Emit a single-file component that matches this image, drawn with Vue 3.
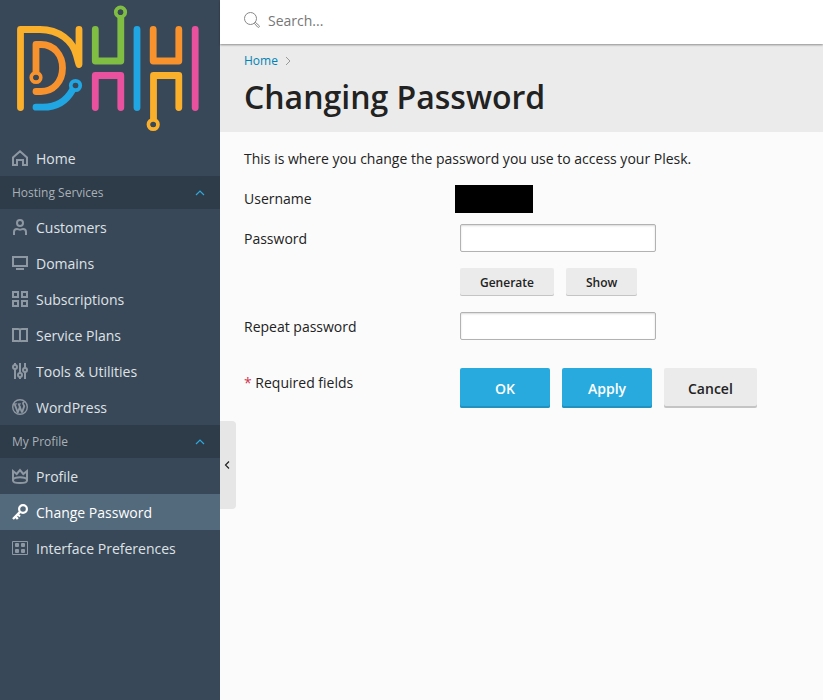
<script setup>
import { ref } from 'vue';

const search = ref('');
const password = ref('');
const repeatPassword = ref('');
const showPassword = ref(false);

const groups = ref([
  {
    title: '',
    open: true,
    items: [{ label: 'Home', icon: 'home' }],
  },
  {
    title: 'Hosting Services',
    open: true,
    items: [
      { label: 'Customers', icon: 'user' },
      { label: 'Domains', icon: 'screen' },
      { label: 'Subscriptions', icon: 'grid' },
      { label: 'Service Plans', icon: 'book' },
      { label: 'Tools & Utilities', icon: 'sliders' },
      { label: 'WordPress', icon: 'wordpress' },
    ],
  },
  {
    title: 'My Profile',
    open: true,
    items: [
      { label: 'Profile', icon: 'crown' },
      { label: 'Change Password', icon: 'key', active: true },
      { label: 'Interface Preferences', icon: 'prefs' },
    ],
  },
]);

const generate = () => {
  const value = Math.random().toString(36).slice(2, 14);
  password.value = value;
  repeatPassword.value = value;
};

const reset = () => {
  password.value = '';
  repeatPassword.value = '';
};
</script>

<template>
  <div class="page">
    <aside class="sidebar">
      <a href="#" class="logo" aria-label="DHH">
        <svg width="220" height="140" viewBox="0 0 220 140" fill="none" stroke-width="6.8" stroke-linecap="round" stroke-linejoin="round">
          <g stroke="#fbb02c">
            <path d="M20.500 107.500V29.500H40C59 29.500 73 41 76.500 55.500C77.500 59 78 62 79 64.500V29.500" />
            <path d="M153.500 120V75.500H178.800V107.500" />
            <circle cx="153.200" cy="124.500" r="4.600" stroke-width="4" />
          </g>
          <g stroke="#f7922d">
            <path d="M36 72V44.500H41C54 44.500 62.500 55 62.500 68C62.500 82 53 91.500 41 91.500H36" />
            <circle cx="36" cy="77.500" r="4.600" stroke-width="4" />
            <path d="M153.200 29.500V61H178.800V29.500" />
          </g>
          <g stroke="#20a6e2">
            <path d="M36 107.200H43C57 107.200 67 100 72.500 90" />
            <circle cx="75.500" cy="85.500" r="4.600" stroke-width="4" />
            <path d="M137 29.500V107.500" />
          </g>
          <g stroke="#80bd43">
            <path d="M95.300 29.500V61H120.800V17" />
            <circle cx="120.500" cy="12.200" r="4.600" stroke-width="4" />
          </g>
          <g stroke="#e9519f">
            <path d="M95.300 107.500V75.500H120.800V107.500" />
            <path d="M195.200 29.500V107.500" />
          </g>
          <g fill="#394858">
            <circle cx="153.200" cy="124.500" r="2.800" />
            <circle cx="36" cy="77.500" r="2.800" />
            <circle cx="75.500" cy="85.500" r="2.800" />
            <circle cx="120.500" cy="12.200" r="2.800" />
          </g>
        </svg>
      </a>

      <nav>
        <div v-for="group in groups" :key="group.title">
          <button
            v-if="group.title"
            type="button"
            class="group-title"
            :aria-expanded="group.open"
            @click="group.open = !group.open"
          >
            {{ group.title }}
            <svg width="10" height="6" viewBox="0 0 10 6" :class="{ closed: !group.open }">
              <path d="M1 5L5 1L9 5" fill="none" stroke="#2ea9dc" stroke-width="1.200" />
            </svg>
          </button>
          <template v-if="group.open">
            <a
              v-for="item in group.items"
              :key="item.label"
              href="#"
              class="nav-item"
              :class="{ active: item.active }"
            >
              <svg class="icon" width="16" height="16" viewBox="0 0 16 16" fill="none" stroke="currentColor" stroke-width="2">
                <path v-if="item.icon === 'home'" d="M1 15V7.500L8 1.300L15 7.500V15H11V10H5V15Z" />
                <template v-else-if="item.icon === 'user'">
                  <circle cx="8" cy="4" r="3" />
                  <path d="M2 16V13C2 11 3 10 5 10C6.200 10 6.800 10.800 8 10.800S9.800 10 11 10C13 10 14 11 14 13V16" />
                </template>
                <template v-else-if="item.icon === 'screen'">
                  <path d="M1 2H15V11H1Z" />
                  <path d="M4 14H12" />
                </template>
                <path v-else-if="item.icon === 'grid'" d="M1 1H6V6H1ZM10 1H15V6H10ZM1 10H6V15H1ZM10 10H15V15H10Z" />
                <path v-else-if="item.icon === 'book'" d="M1 2H6Q8 2 8 3Q8 2 10 2H15V14H10Q8 14 8 15Q8 14 6 14H1ZM8 2V15" />
                <template v-else-if="item.icon === 'sliders'">
                  <circle cx="3" cy="4" r="2" />
                  <circle cx="8" cy="12" r="2" />
                  <circle cx="13" cy="7" r="2" />
                  <path d="M3 6V16M3 0V2M8 0V10M8 14V16M13 0V5M13 9V16" />
                </template>
                <template v-else-if="item.icon === 'wordpress'">
                  <circle cx="8" cy="8" r="7.300" stroke-width="1.400" />
                  <path d="M2.600 5L6 14M6.700 5L10 13.500M5.800 13.500L8.200 7M10 13.500L12.300 7" stroke-width="1.900" />
                  <path d="M2 4.900H5M5.800 4.900H9" stroke-width="1" />
                  <path d="M12.300 7.500C12.300 5.800 10.700 5.500 11 4C11.200 3.200 12 3 12.600 3" stroke-width="1.700" />
                </template>
                <template v-else-if="item.icon === 'crown'">
                  <path d="M1 3V12.500C1 14 4 15 8 15S15 14 15 12.500V3L11.300 6L8 2L4.700 6Z" />
                  <path d="M1 11.500C2 9.900 5 9.300 8 9.300S14 9.900 15 11.500" />
                </template>
                <template v-else-if="item.icon === 'key'">
                  <circle cx="11" cy="5" r="3.900" stroke-width="2.200" />
                  <path d="M8.300 7.700L1 15M3.200 12L5.800 15" stroke-width="2.400" />
                  <path d="M5.500 10L8 12.500" />
                </template>
                <template v-else>
                  <path d="M0.500 1.500H15.500V14.500H0.500Z" stroke-width="1" />
                  <g fill="currentColor" stroke="none">
                    <rect x="3" y="3" width="4" height="4" rx="1" />
                    <rect x="9" y="3" width="4" height="4" rx="1" />
                    <rect x="3" y="9" width="4" height="4" rx="1" />
                    <rect x="9" y="9" width="4" height="4" rx="1" />
                  </g>
                </template>
              </svg>
              <span class="nav-label">{{ item.label }}</span>
            </a>
          </template>
        </div>
      </nav>

      <button type="button" class="collapse" aria-label="Collapse sidebar">
        <svg width="6" height="8" viewBox="0 0 6 8">
          <path d="M5 0.500L1.500 4L5 7.500" fill="none" stroke="#222" stroke-width="1.200" />
        </svg>
      </button>
    </aside>

    <main class="main">
      <form class="search" role="search" @submit.prevent>
        <label for="search" aria-label="Search">
          <svg width="16" height="16" viewBox="0 0 16 16" fill="none" stroke="#888" stroke-width="1">
            <circle cx="6.500" cy="6.500" r="6" />
            <path d="M10.300 11.300L11.300 10.300L15.200 13.700Q15.800 14.500 15.100 15.100Q14.400 15.700 13.700 15.100Z" />
          </svg>
        </label>
        <input id="search" v-model="search" type="text" placeholder="Search..." />
      </form>

      <header class="heading">
        <div class="breadcrumb">
          <a href="#">Home</a>
          <svg width="6" height="10" viewBox="0 0 6 10">
            <path d="M1 1L5 5L1 9" fill="none" stroke="#999" stroke-width="1" />
          </svg>
        </div>
        <h1>Changing Password</h1>
      </header>

      <form class="content" @submit.prevent>
        <p>This is where you change the password you use to access your Plesk.</p>

        <div class="row compact">
          <span>Username</span>
          <div class="username"></div>
        </div>
        <div class="row">
          <label for="password">Password</label>
          <div class="field">
            <input id="password" v-model="password" :type="showPassword ? 'text' : 'password'" />
          </div>
        </div>
        <div class="row">
          <span></span>
          <div class="field">
            <button type="button" class="small" @click="generate">Generate</button>
            <button type="button" class="small" @click="showPassword = !showPassword">Show</button>
          </div>
        </div>
        <div class="row">
          <label for="repeat-password">Repeat password</label>
          <div class="field">
            <input id="repeat-password" v-model="repeatPassword" :type="showPassword ? 'text' : 'password'" />
          </div>
        </div>
        <div class="row actions">
          <span><span class="required">*</span> Required fields</span>
          <div class="field">
            <button type="submit" class="large primary">OK</button>
            <button type="button" class="large primary">Apply</button>
            <button type="button" class="large" @click="reset">Cancel</button>
          </div>
        </div>
      </form>
    </main>
  </div>
</template>

<style>
body {
  background: #fbfbfb;
}
</style>

<style scoped>
.page {
  display: flex;
  min-height: 100vh;
  font-family: 'Open Sans', sans-serif;
  font-size: 14px;
  line-height: 20px;
  color: #222;
}
button,
input {
  box-sizing: border-box;
  font: inherit;
  color: inherit;
}
button {
  cursor: pointer;
}
.sidebar {
  position: relative;
  flex: 0 0 220px;
  background: #394858;
}
.logo,
.logo svg {
  display: block;
}
.group-title {
  display: flex;
  align-items: center;
  justify-content: space-between;
  width: 100%;
  height: 33px;
  padding: 0 15px 0 12px;
  border: 0;
  background: #2e3b48;
  color: #a9b1b8;
  font-size: 12px;
}
.closed {
  transform: rotate(180deg);
}
.nav-item {
  display: flex;
  align-items: center;
  gap: 8px;
  height: 36px;
  padding: 0 12px;
  color: #dfe3e6;
  text-decoration: none;
}
.nav-label {
  padding-top: 2px;
}
.icon {
  color: #8e98a2;
}
.nav-item.active {
  background: #536a7c;
  color: #fff;
}
.nav-item.active .icon {
  color: #fff;
}
.collapse {
  position: absolute;
  top: 421px;
  left: 100%;
  display: flex;
  align-items: center;
  justify-content: center;
  width: 16px;
  height: 88px;
  padding: 0 2px 0 0;
  border: 0;
  border-radius: 0 4px 4px 0;
  background: #e6e6e6;
}
.main {
  flex: 1;
  min-width: 0;
}
.search {
  position: relative;
  display: flex;
  align-items: center;
  gap: 8px;
  height: 44px;
  padding: 0 24px 4px;
  box-sizing: border-box;
  background: #fff;
  box-shadow: 0 1px 2px rgba(0, 0, 0, 0.4);
}
.search label,
.search svg {
  display: block;
}
.search input {
  flex: 1;
  min-width: 0;
  padding: 2px 0 0;
  border: 0;
  outline: 0;
  background: none;
}
.search input::placeholder {
  color: #777;
  opacity: 1;
}
.heading {
  padding: 7px 24px 13px;
  background: #ebebeb;
}
.breadcrumb {
  display: flex;
  align-items: center;
  gap: 7px;
  font-size: 12px;
}
.breadcrumb a {
  color: #0083b4;
  text-decoration: none;
}
h1 {
  margin: 4px 0 0;
  font-size: 32px;
  font-weight: 600;
  line-height: 44px;
}
.content {
  padding: 17px 24px;
}
.content p {
  margin: 0 0 16px;
}
.row {
  display: grid;
  grid-template-columns: 211px 1fr;
  align-items: center;
  margin-bottom: 16px;
}
.row > label {
  padding-top: 2px;
}
.compact {
  margin-bottom: 11px;
}
.username {
  width: 78px;
  height: 28px;
  background: #000;
}
.field {
  display: flex;
  gap: 12px;
  padding-left: 5px;
}
.field input {
  width: 196px;
  height: 28px;
  padding: 0 8px;
  border: 1px solid #b2b2b2;
  border-radius: 2px;
  background: #fff;
  box-shadow: inset 0 1px 2px rgba(0, 0, 0, 0.15);
}
.field button {
  border: 0;
  border-radius: 2px;
  background: #ebebeb;
  font-weight: 600;
}
.field .small {
  height: 28px;
  padding: 2px 20px 0;
  box-shadow: inset 0 -1px #c4c4c4;
  font-size: 12px;
}
.field .large {
  min-width: 90px;
  height: 40px;
  padding: 2px 24px 0;
  box-shadow: inset 0 -2px #c4c4c4;
}
.field .primary {
  background: #28aade;
  box-shadow: inset 0 -2px #2391be;
  color: #fff;
}
.actions {
  align-items: start;
  margin-top: 28px;
}
.actions > span {
  padding-top: 5px;
}
.required {
  color: #d0354f;
}
</style>
